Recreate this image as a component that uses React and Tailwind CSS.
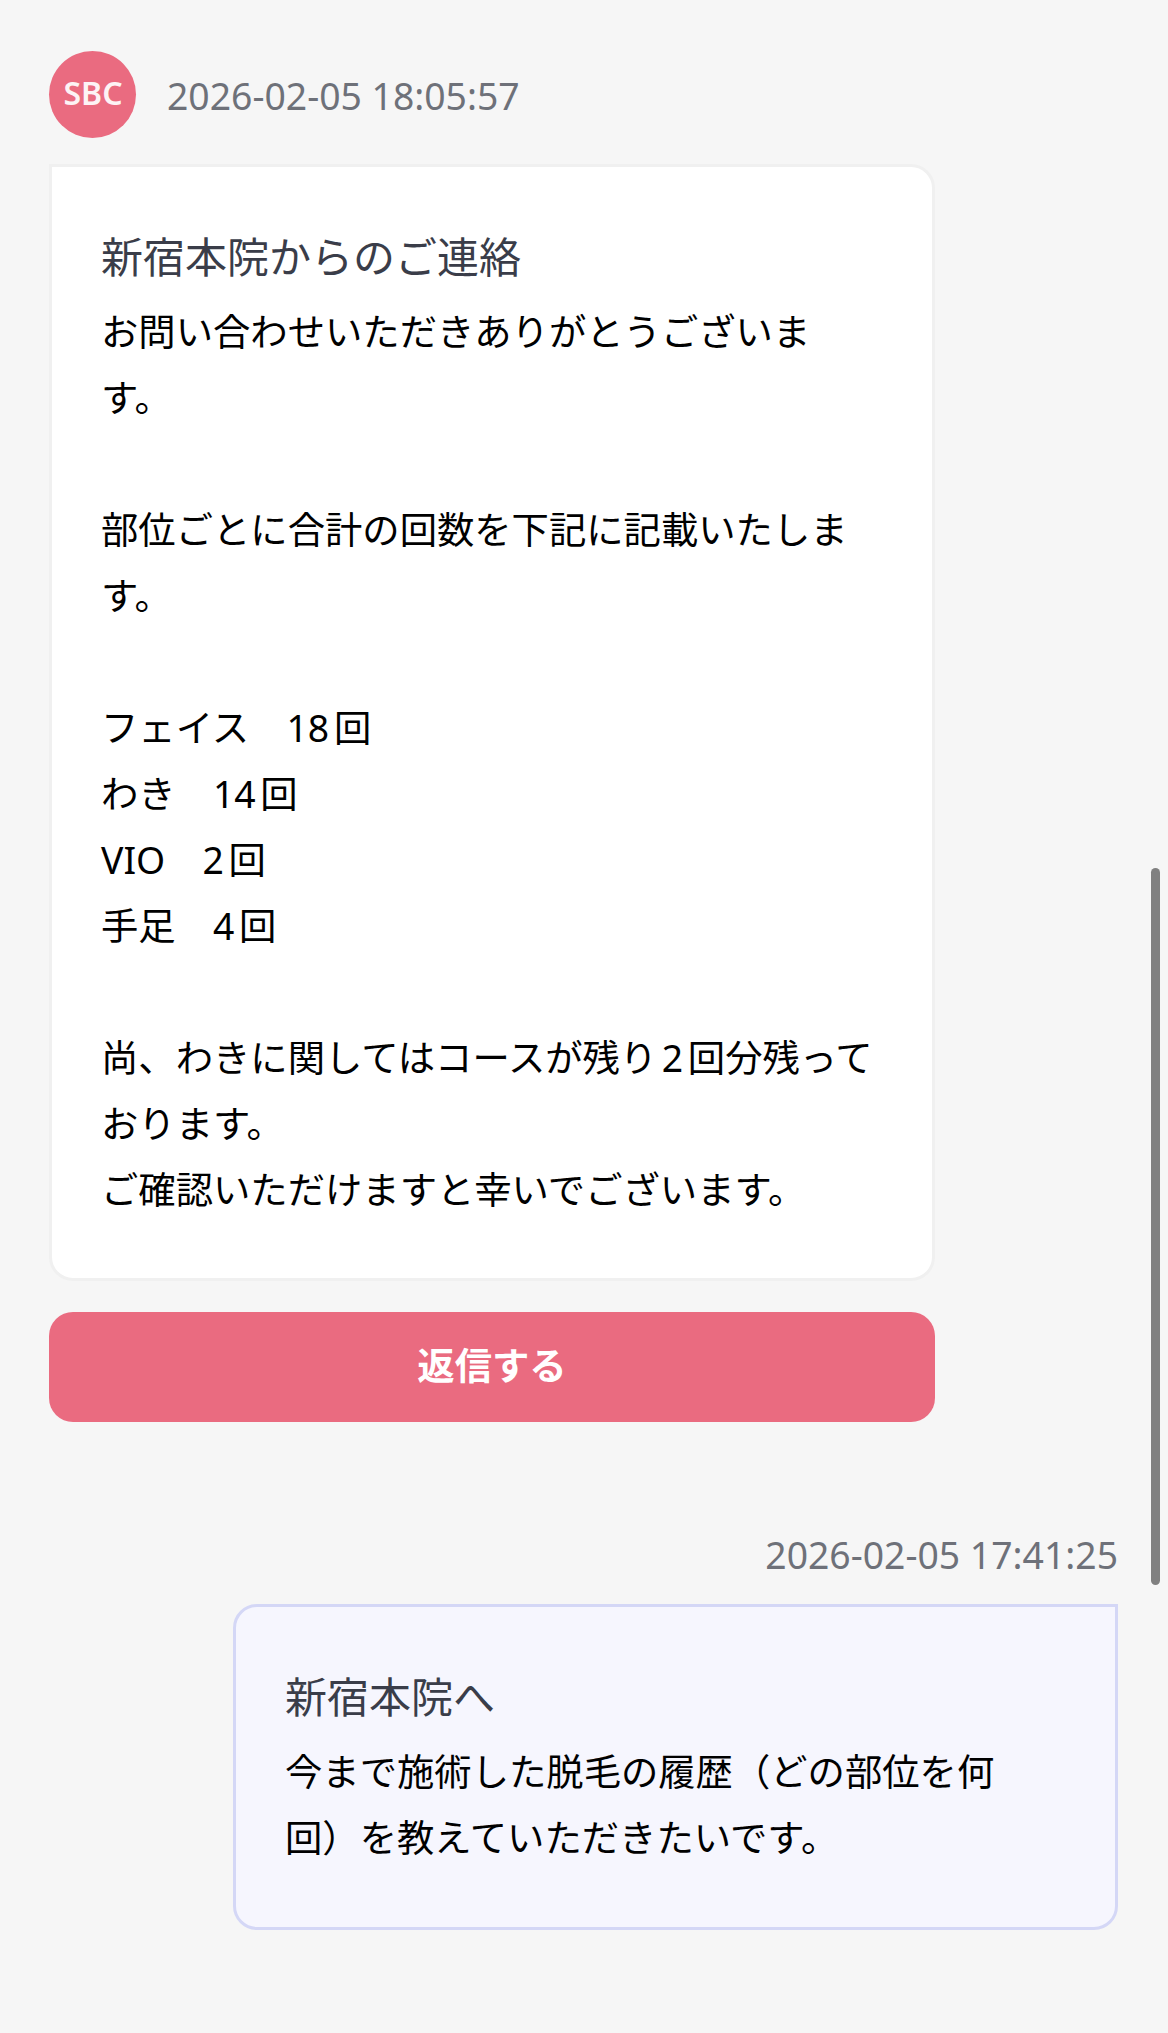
import React from 'react';

const Bubble = ({ title, body, className }) => (
  <div className={`pr-[51px] pt-[58px] ${className}`}>
    <h3 className="text-[42px] leading-[64px] font-normal text-[#3a3d49]">{title}</h3>
    <p className="mt-[10px] text-[37.33px] leading-[66px] text-black whitespace-pre-wrap [text-spacing-trim:space-all]">{body}</p>
  </div>
);

const clinicBody = `お問い合わせいただきありがとうございます。

部位ごとに合計の回数を下記に記載いたします。

フェイス　18回
わき　14回
VIO　2回
手足　4回

尚、わきに関してはコースが残り2回分残っております。
ご確認いただけますと幸いでございます。`;

const userBody = '今まで施術した脱毛の履歴（どの部位を何回）を教えていただきたいです。';

export default function App() {
  return (
    <div className="relative h-[2033px] overflow-hidden bg-[#f6f6f6] font-['Noto_Sans','Noto_Sans_CJK_JP',sans-serif] [text-autospace:normal]">
      <div className="flex flex-col pl-[49px] pr-[50px] pt-[51px]">
        <div className="w-[886px]">
          <div className="flex items-center gap-[31px]">
            <div className="flex h-[87px] w-[87px] items-center justify-center rounded-full bg-[#ea6b80] pb-[3px] pl-[1px] text-[32px] font-semibold text-[#fdf3f5]">
              SBC
            </div>
            <span className="mt-[2px] text-[37.33px] leading-[50px] text-[#6e7179]">2026-02-05 18:05:57</span>
          </div>
          <Bubble
            title="新宿本院からのご連絡"
            body={clinicBody}
            className="mt-[26px] rounded-b-[24px] rounded-tr-[24px] border-[3px] border-[#f0f0f0] bg-white pl-[49px] pb-[55px]"
          />
          <button className="mt-[31px] h-[110px] w-full rounded-[24px] bg-[#ea6b80] pb-[2px] text-[37.33px] font-bold text-white">
            返信する
          </button>
        </div>
        <div className="mt-[108px] flex flex-col items-end">
          <span className="text-[37.33px] leading-[50px] text-[#6e7179]">2026-02-05 17:41:25</span>
          <Bubble
            title="新宿本院へ"
            body={userBody}
            className="mt-[24px] w-[885px] rounded-b-[24px] rounded-tl-[24px] border-[3px] border-[#d4d7f6] bg-[#f6f6fe] pl-[49px] pb-[56px]"
          />
        </div>
      </div>
      {/* overlay scrollbar */}
      <div className="absolute right-[8px] top-[868px] h-[717px] w-[9px] rounded-full bg-[#808080]" />
    </div>
  );
}
